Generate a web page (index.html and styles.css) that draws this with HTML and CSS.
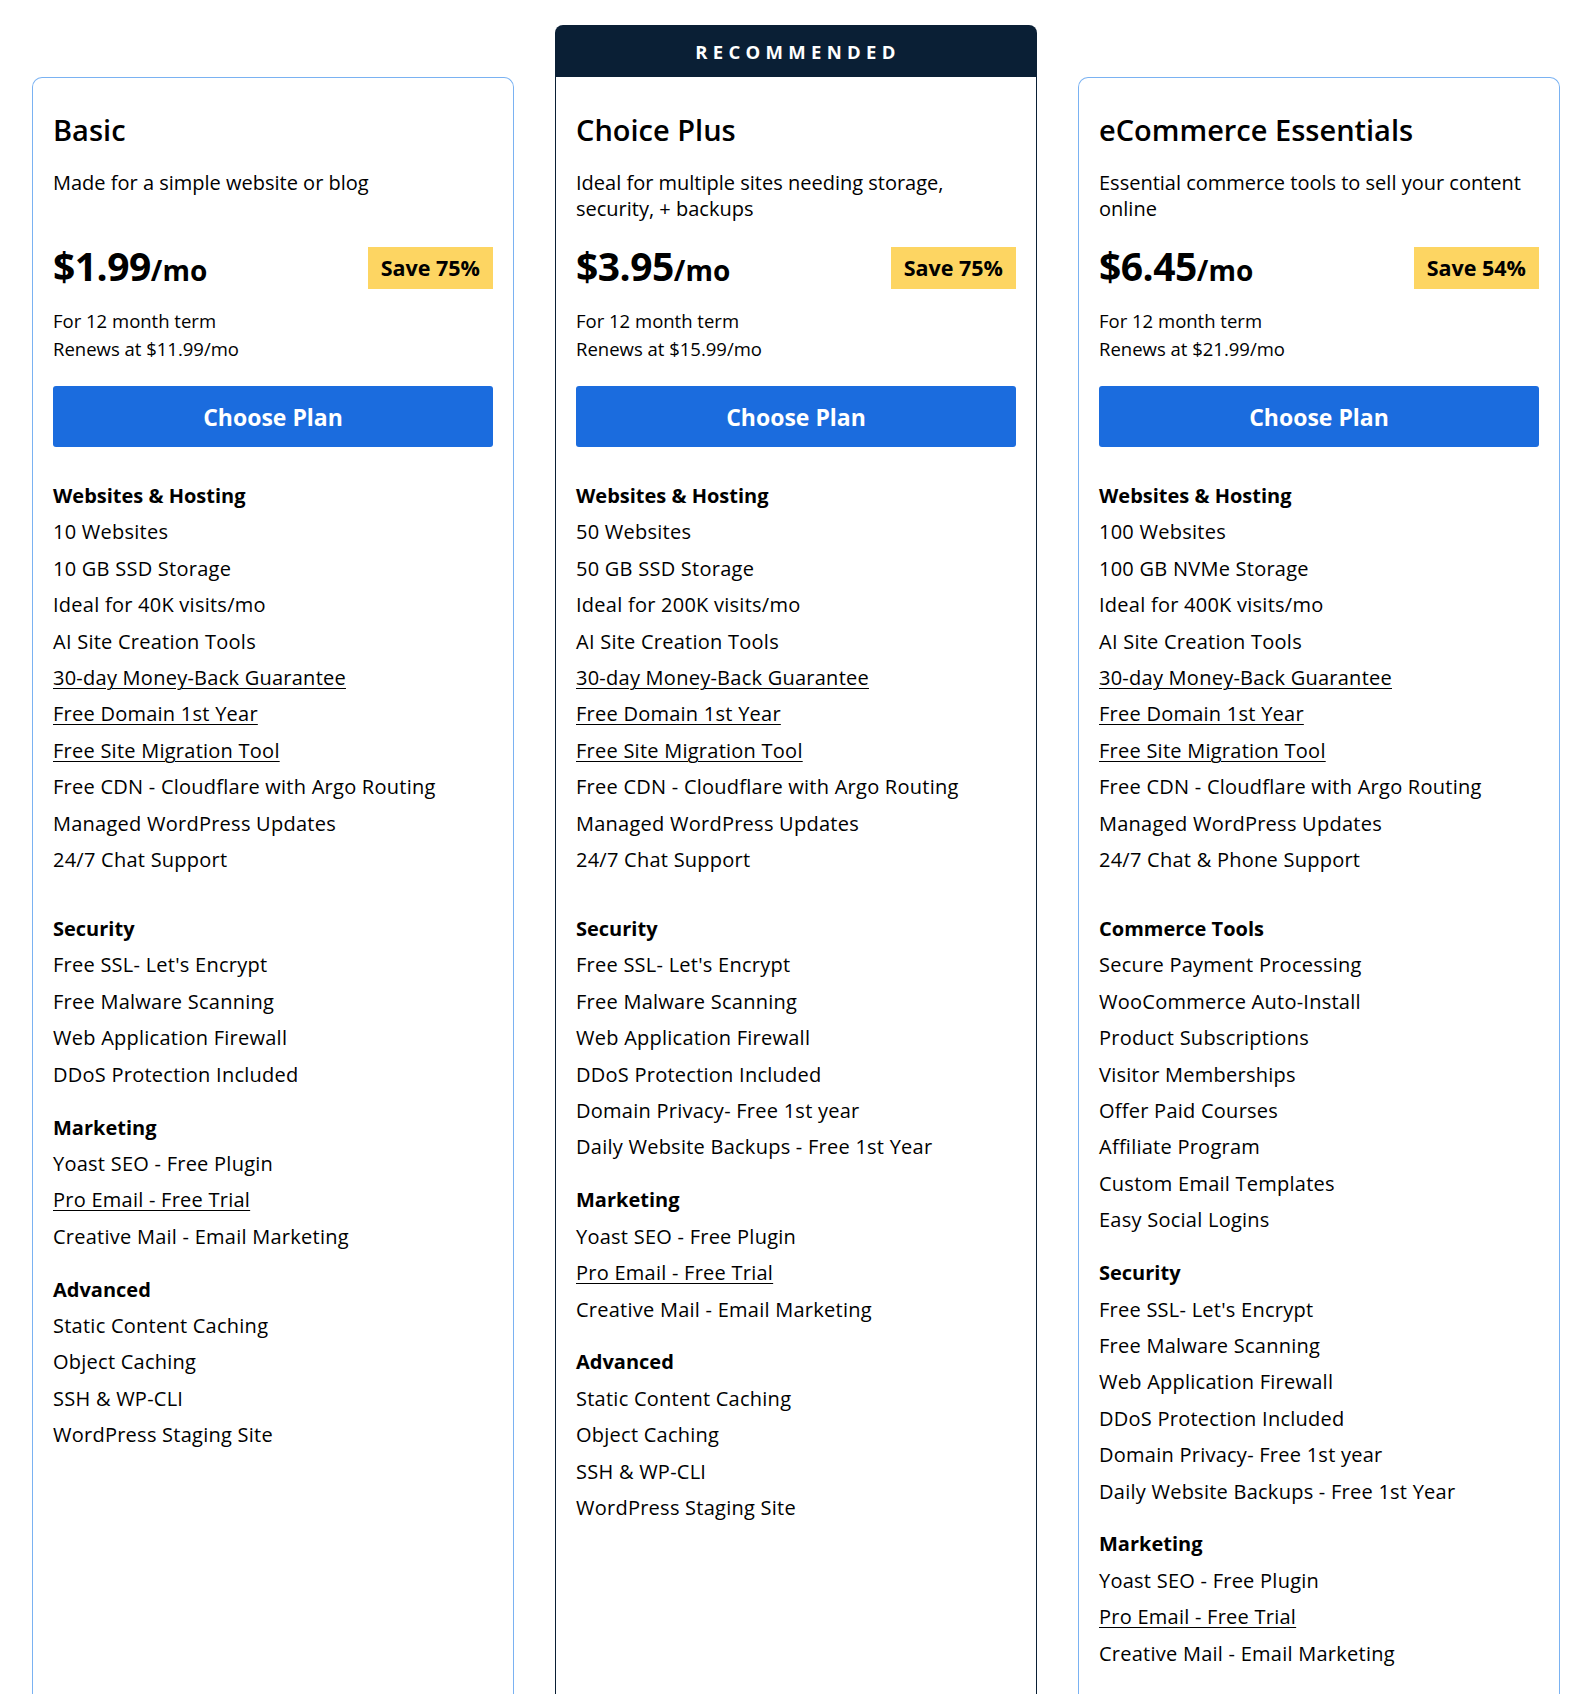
FILE: index.html
```html
<!DOCTYPE html>
<html lang="en">
<head>
<meta charset="utf-8">
<title>Plans</title>
<link rel="stylesheet" href="styles.css">
</head>
<body>
<div class="page">
  <div class="plans">
    <section class="card">
      <h2 class="plan-name">Basic</h2>
      <p class="plan-desc">Made for a simple website or blog</p>
      <div class="price-row">
        <div class="price"><span class="amount">$1.99</span><span class="per">/mo</span></div>
        <span class="save">Save 75%</span>
      </div>
      <p class="term">For 12 month term<br>Renews at $11.99/mo</p>
      <button class="choose">Choose Plan</button>
      <div class="group group-first">
        <h3>Websites &amp; Hosting</h3>
        <ul>
          <li>10 Websites</li>
          <li>10 GB SSD Storage</li>
          <li>Ideal for 40K visits/mo</li>
          <li>AI Site Creation Tools</li>
          <li><a href="#">30-day Money-Back Guarantee</a></li>
          <li><a href="#">Free Domain 1st Year</a></li>
          <li><a href="#">Free Site Migration Tool</a></li>
          <li>Free CDN - Cloudflare with Argo Routing</li>
          <li>Managed WordPress Updates</li>
          <li>24/7 Chat Support</li>
        </ul>
      </div>
      <div class="group">
        <h3>Security</h3>
        <ul>
          <li>Free SSL- Let's Encrypt</li>
          <li>Free Malware Scanning</li>
          <li>Web Application Firewall</li>
          <li>DDoS Protection Included</li>
        </ul>
      </div>
      <div class="group">
        <h3>Marketing</h3>
        <ul>
          <li>Yoast SEO - Free Plugin</li>
          <li><a href="#">Pro Email - Free Trial</a></li>
          <li>Creative Mail - Email Marketing</li>
        </ul>
      </div>
      <div class="group">
        <h3>Advanced</h3>
        <ul>
          <li>Static Content Caching</li>
          <li>Object Caching</li>
          <li>SSH &amp; WP-CLI</li>
          <li>WordPress Staging Site</li>
        </ul>
      </div>
    </section>

    <section class="card-rec">
      <div class="rec-label">RECOMMENDED</div>
      <div class="card card-featured">
        <h2 class="plan-name">Choice Plus</h2>
        <p class="plan-desc">Ideal for multiple sites needing storage, security, + backups</p>
        <div class="price-row">
          <div class="price"><span class="amount">$3.95</span><span class="per">/mo</span></div>
          <span class="save">Save 75%</span>
        </div>
        <p class="term">For 12 month term<br>Renews at $15.99/mo</p>
        <button class="choose">Choose Plan</button>
        <div class="group group-first">
          <h3>Websites &amp; Hosting</h3>
          <ul>
            <li>50 Websites</li>
            <li>50 GB SSD Storage</li>
            <li>Ideal for 200K visits/mo</li>
            <li>AI Site Creation Tools</li>
            <li><a href="#">30-day Money-Back Guarantee</a></li>
            <li><a href="#">Free Domain 1st Year</a></li>
            <li><a href="#">Free Site Migration Tool</a></li>
            <li>Free CDN - Cloudflare with Argo Routing</li>
            <li>Managed WordPress Updates</li>
            <li>24/7 Chat Support</li>
          </ul>
        </div>
        <div class="group">
          <h3>Security</h3>
          <ul>
            <li>Free SSL- Let's Encrypt</li>
            <li>Free Malware Scanning</li>
            <li>Web Application Firewall</li>
            <li>DDoS Protection Included</li>
            <li>Domain Privacy- Free 1st year</li>
            <li>Daily Website Backups - Free 1st Year</li>
          </ul>
        </div>
        <div class="group">
          <h3>Marketing</h3>
          <ul>
            <li>Yoast SEO - Free Plugin</li>
            <li><a href="#">Pro Email - Free Trial</a></li>
            <li>Creative Mail - Email Marketing</li>
          </ul>
        </div>
        <div class="group">
          <h3>Advanced</h3>
          <ul>
            <li>Static Content Caching</li>
            <li>Object Caching</li>
            <li>SSH &amp; WP-CLI</li>
            <li>WordPress Staging Site</li>
          </ul>
        </div>
      </div>
    </section>

    <section class="card">
      <h2 class="plan-name">eCommerce Essentials</h2>
      <p class="plan-desc">Essential commerce tools to sell your content online</p>
      <div class="price-row">
        <div class="price"><span class="amount">$6.45</span><span class="per">/mo</span></div>
        <span class="save">Save 54%</span>
      </div>
      <p class="term">For 12 month term<br>Renews at $21.99/mo</p>
      <button class="choose">Choose Plan</button>
      <div class="group group-first">
        <h3>Websites &amp; Hosting</h3>
        <ul>
          <li>100 Websites</li>
          <li>100 GB NVMe Storage</li>
          <li>Ideal for 400K visits/mo</li>
          <li>AI Site Creation Tools</li>
          <li><a href="#">30-day Money-Back Guarantee</a></li>
          <li><a href="#">Free Domain 1st Year</a></li>
          <li><a href="#">Free Site Migration Tool</a></li>
          <li>Free CDN - Cloudflare with Argo Routing</li>
          <li>Managed WordPress Updates</li>
          <li>24/7 Chat &amp; Phone Support</li>
        </ul>
      </div>
      <div class="group">
        <h3>Commerce Tools</h3>
        <ul>
          <li>Secure Payment Processing</li>
          <li>WooCommerce Auto-Install</li>
          <li>Product Subscriptions</li>
          <li>Visitor Memberships</li>
          <li>Offer Paid Courses</li>
          <li>Affiliate Program</li>
          <li>Custom Email Templates</li>
          <li>Easy Social Logins</li>
        </ul>
      </div>
      <div class="group">
        <h3>Security</h3>
        <ul>
          <li>Free SSL- Let's Encrypt</li>
          <li>Free Malware Scanning</li>
          <li>Web Application Firewall</li>
          <li>DDoS Protection Included</li>
          <li>Domain Privacy- Free 1st year</li>
          <li>Daily Website Backups - Free 1st Year</li>
        </ul>
      </div>
      <div class="group">
        <h3>Marketing</h3>
        <ul>
          <li>Yoast SEO - Free Plugin</li>
          <li><a href="#">Pro Email - Free Trial</a></li>
          <li>Creative Mail - Email Marketing</li>
        </ul>
      </div>
    </section>
  </div>
</div>
</body>
</html>
```
FILE: styles.css
```css
* { box-sizing: border-box; }

html, body {
  margin: 0;
  padding: 0;
  background: #ffffff;
}

body {
  font-family: "Open Sans", "Noto Sans", "Liberation Sans", sans-serif;
  color: #000000;
}

.page {
  height: 1694px;
  overflow: hidden;
}

.plans {
  display: grid;
  grid-template-columns: 482px 482px 482px;
  column-gap: 41px;
  padding: 25px 0 0 32px;
  align-items: stretch;
}

.card {
  margin-top: 52px;
  border: 1px solid #7ab2f2;
  border-bottom: none;
  border-radius: 10px 10px 0 0;
  padding: 35px 20px 160px;
  background: #ffffff;
}

.card-rec {
  display: flex;
  flex-direction: column;
}

.rec-label {
  height: 52px;
  background: #0a1f35;
  color: #ffffff;
  border-radius: 8px 8px 0 0;
  display: flex;
  align-items: center;
  justify-content: center;
  font-size: 18.5px;
  font-weight: 700;
  letter-spacing: 5.3px;
  padding-left: 4px;
}

.card-featured {
  margin-top: 0;
  flex: 1;
  border: 1px solid #0a1f35;
  border-top: none;
  border-radius: 0;
  padding-top: 36px;
}

.plan-name {
  margin: 0;
  font-size: 29px;
  line-height: 34px;
  font-weight: 600;
}

.plan-desc {
  margin: 23px 0 0;
  font-size: 20px;
  line-height: 26px;
  min-height: 52px;
}

.price-row {
  margin-top: 25px;
  display: flex;
  align-items: center;
  justify-content: space-between;
  height: 42px;
}

.price {
  white-space: nowrap;
  font-weight: 700;
  line-height: 42px;
  padding-top: 4px;
}

.amount {
  font-size: 39px;
  letter-spacing: -0.5px;
}

.per {
  font-size: 28px;
}

.save {
  background: #fdd562;
  font-size: 21.5px;
  font-weight: 700;
  height: 42px;
  line-height: 42px;
  padding: 0 13px;
}

.term {
  margin: 18px 0 0;
  font-size: 18.5px;
  line-height: 28px;
  font-weight: 500;
}

.choose {
  display: block;
  width: 100%;
  margin-top: 23px;
  height: 61px;
  border: none;
  border-radius: 3px;
  background: #1b6cde;
  color: #ffffff;
  font-family: inherit;
  font-size: 23px;
  font-weight: 700;
}

.group {
  margin-top: 0;
  margin-bottom: 16.5px;
}

.group-first {
  margin-top: 31px;
  margin-bottom: 32.5px;
}

.group h3 {
  margin: 0;
  font-size: 20px;
  font-weight: 700;
  line-height: 36.4px;
}

.group ul {
  list-style: none;
  margin: 0;
  padding: 0;
}

.group li {
  font-size: 20px;
  line-height: 36.4px;
  letter-spacing: 0.25px;
}

.group a {
  color: #000000;
  text-decoration: underline;
  text-decoration-thickness: 1px;
  text-underline-offset: 3px;
}
```
